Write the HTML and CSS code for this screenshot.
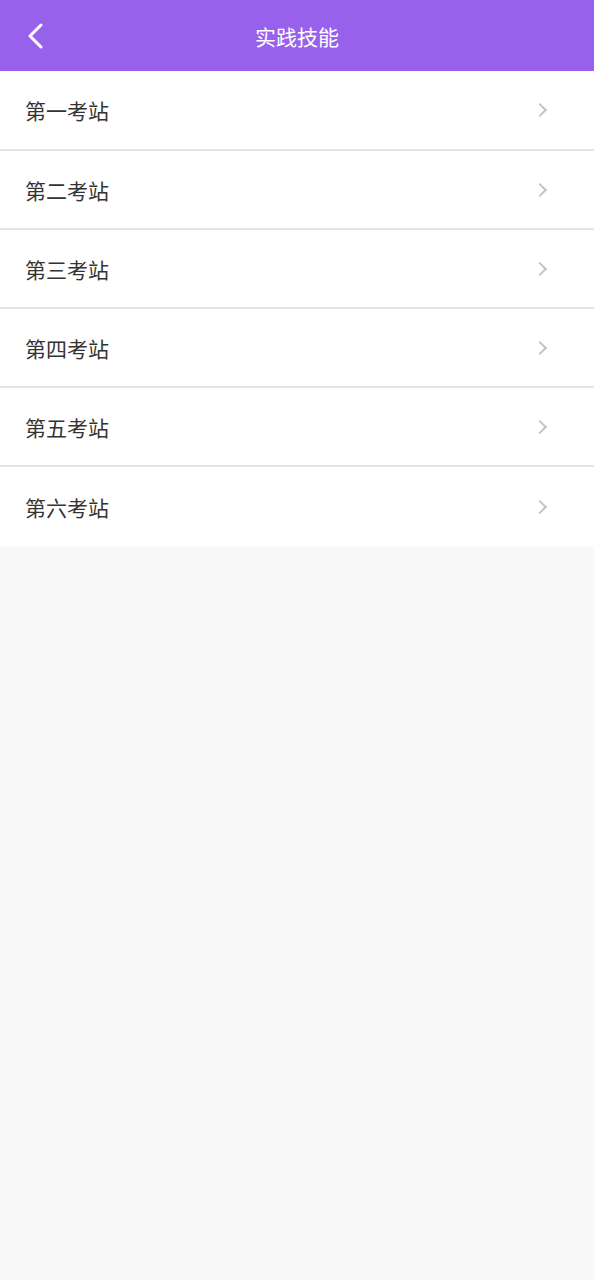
FILE: index.html
```html
<!DOCTYPE html>
<html lang="zh-CN">
<head>
    <meta charset="UTF-8">
    <meta name="viewport" content="width=device-width, initial-scale=1.0">
    <title>实践技能</title>
    <link rel="stylesheet" href="styles.css">
</head>
<body>

<header class="topbar">
    <a class="back-btn" href="#">
        <svg width="18" height="26" viewBox="0 0 18 26">
            <path d="M15 2 L4 13 L15 24" fill="none" stroke="#fff" stroke-width="3" stroke-linecap="round" stroke-linejoin="round"/>
        </svg>
    </a>
    <h1>实践技能</h1>
</header>

<!-- 考站列表 -->
<ul class="station-list">
    <li class="station-item"><span>第一考站</span><i class="arrow"></i></li>
    <li class="station-item"><span>第二考站</span><i class="arrow"></i></li>
    <li class="station-item"><span>第三考站</span><i class="arrow"></i></li>
    <li class="station-item"><span>第四考站</span><i class="arrow"></i></li>
    <li class="station-item"><span>第五考站</span><i class="arrow"></i></li>
    <li class="station-item"><span>第六考站</span><i class="arrow"></i></li>
</ul>

</body>
</html>
```

FILE: styles.css
```css
body {
    margin: 0;
    padding: 0;
    background-color: #f9f9f9;
    font-family: 'Noto Sans CJK SC', 'Noto Sans', sans-serif;
    min-height: 100vh;
}
.topbar {
    height: 71px;
    background-color: #9861ec;
    display: flex;
    align-items: center;
    justify-content: center;
    position: relative;
}
.topbar h1 {
    margin: 0;
    color: #fff;
    font-size: 21px;
    font-weight: normal;
}
.back-btn {
    position: absolute;
    left: 26px;
    top: 23px;
    display: flex;
}
.station-list {
    list-style: none;
    margin: 0;
    padding: 0;
    background-color: #fff;
}
.station-item {
    height: 77px;
    display: flex;
    align-items: center;
    justify-content: space-between;
    padding: 0 49px 0 25px;
    border-bottom: 2px solid #e4e4e4;
    font-size: 21px;
    color: #333;
}
.station-item:first-child {
    height: 78px;
}
.station-item:last-child {
    height: 79px;
    border-bottom: none;
}
.arrow {
    width: 8px;
    height: 8px;
    border-top: 2px solid #c4c4c4;
    border-right: 2px solid #c4c4c4;
    transform: rotate(45deg);
}
```
